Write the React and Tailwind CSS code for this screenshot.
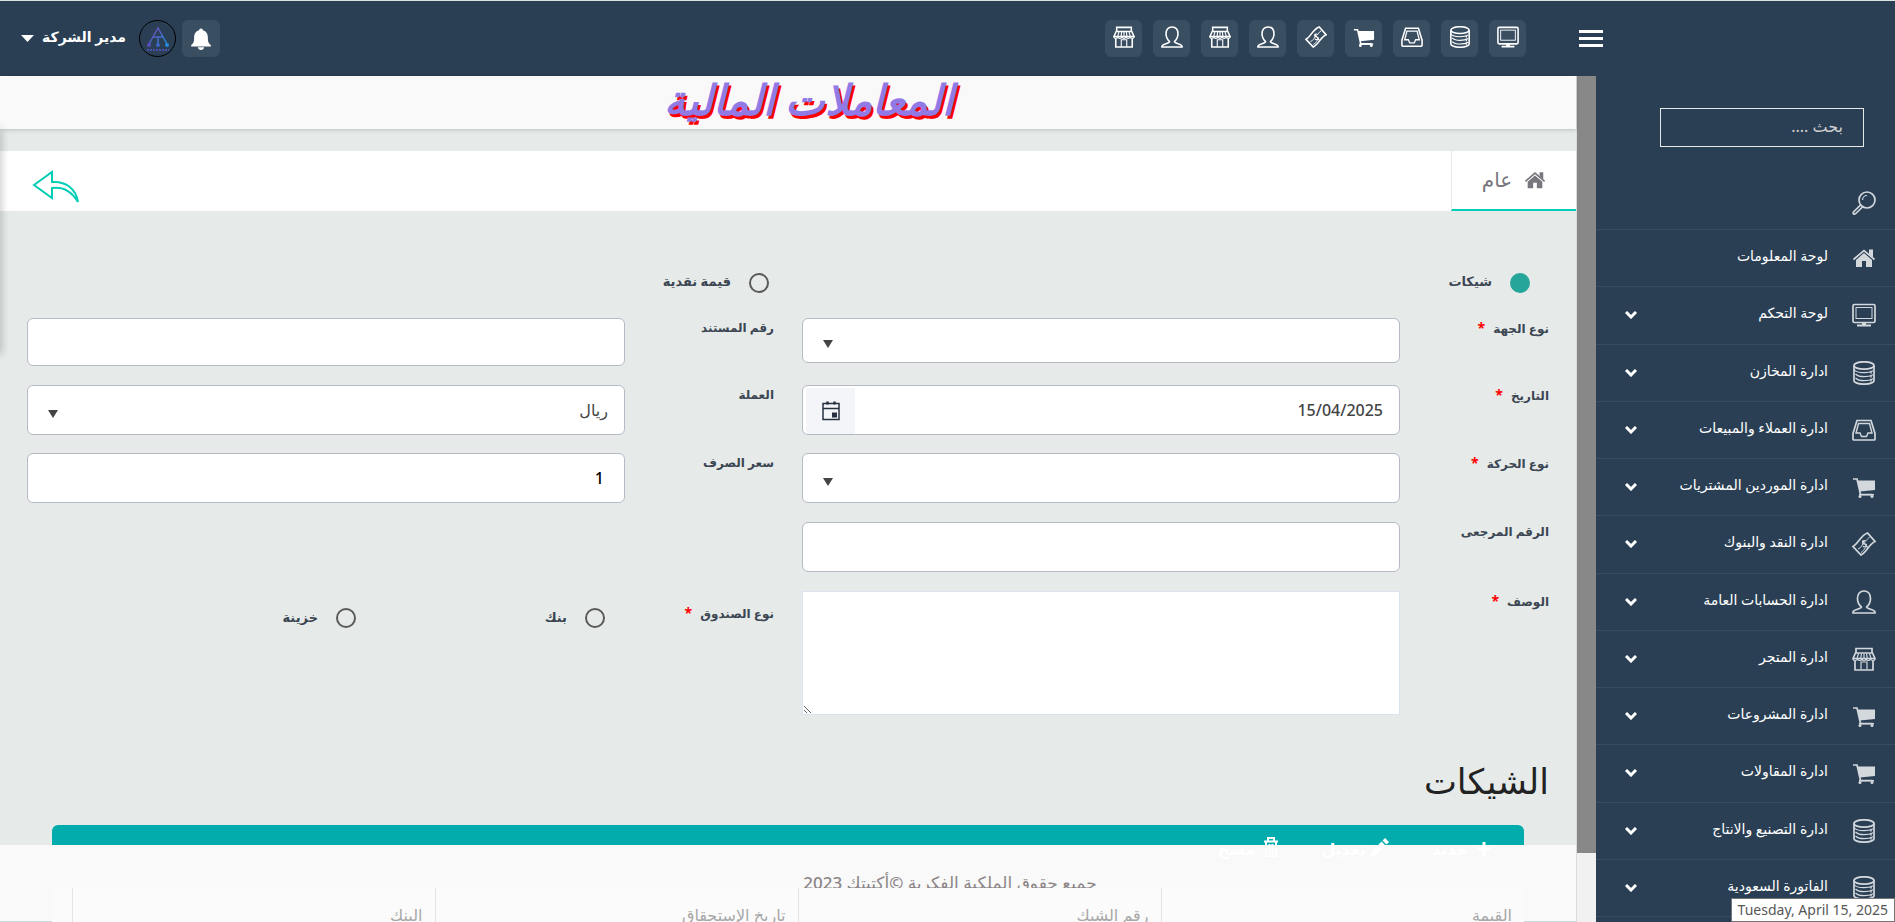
import React, { useState } from 'react';

const iconPaths = {
    monitor: (
        <>
            <rect x="1" y="1.500" width="22" height="18" rx="1.500" />
            <rect x="4" y="4.500" width="16" height="11" strokeWidth="1" />
            <path d="M10 20.500h4M5 22.500h14" strokeWidth="2" />
        </>
    ),
    database: (
        <>
            <ellipse cx="12" cy="4.500" rx="10" ry="3.700" />
            <path d="M2 4.500v15c0 2 4.500 3.700 10 3.700s10-1.700 10-3.700v-15" />
            <path d="M2 8.500c1.500 2.500 5 3.200 10 3.200 3.500 0 6.500-.5 9-2M3.500 13c2 2 5 2.700 8.500 2.700s6.500-.7 9-2M3.500 17c2 2 5 2.700 8.500 2.700s6.500-.7 9-2" strokeWidth="1.200" />
            <path d="M19 10.500v2M19 14.500v2M19 18.500v2" strokeWidth="1.500" />
        </>
    ),
    inbox: (
        <>
            <path d="M5 2.500h14l4 13v5.500q0 1-1 1h-20q-1 0-1-1v-5.500z" />
            <path d="M4 15h4l1.500 3.500h5l1.500-3.500h4l-2.500-9.500h-11z" strokeWidth="1.400" />
        </>
    ),
    cart: (
        <>
            <path d="M1 4h4l3.500 15.500h12" />
            <path d="M5.500 5.500h17.500v9.500l-15 1.500z" fill="currentColor" stroke="none" />
            <path d="M7 19h15v1.500h-15z" fill="currentColor" stroke="none" />
            <circle cx="8" cy="21.500" r="1.500" fill="currentColor" stroke="none" />
            <circle cx="20" cy="21.500" r="1.500" fill="currentColor" stroke="none" />
        </>
    ),
    money: (
        <>
            <path d="M1 14.500C6 12 9 3 15.500 1l7.500 8.500C17 12 15 20 9 23z" />
            <path d="M6 17c3-1 4-4 5-5M17.500 5.500c-1.500.5-2.500 2-3 3M9 20.500c2-1 3-3 4.500-5" strokeWidth="1" />
            <path d="M14 9.500c-1-1.500-4-.5-3.500 1.500.5 1.500 3.500.5 4 2 .5 2-2.500 2.500-3.500 1M10.500 8.500l5 7" strokeWidth="1.300" />
        </>
    ),
    user: (
        <>
            <path d="M9.500 17C7 15 5.500 12 5.500 8.500 5.500 4 8 1 12 1s6.500 3 6.500 7.500c0 3.500-1.500 6.500-4 8.500" />
            <path d="M9.500 16.500c0 3-7.500 2.500-8.500 5.500v1h22v-1c-1-3-8.500-2.500-8.500-5.500" />
        </>
    ),
    store: (
        <>
            <path d="M4 6V1.500h16V6M3.500 6h17l2.500 5.500H1z" />
            <path d="M1 12c.5 2 3.500 2 4.500 0 .5 2 3.500 2 4.300 0 .8 2 3.600 2 4.400 0 .8 2 3.700 2 4.300 0 1 2 4 2 4.500 0M6.500 6.500l-1.500 5M9.500 6.500l-.8 5M12 6.500v5M14.500 6.500l.8 5M17.500 6.500l1.500 5" strokeWidth="1.200" />
            <path d="M3 13.500v9.500h18v-9.500" />
            <path d="M9 22.500v-7.500h6v7.500" strokeWidth="1.200" />
        </>
    ),
    home: (
        <>
            <path d="M12 7l8 7v7h-6v-6h-4v6H4v-7z" fill="currentColor" stroke="none" />
            <path d="M1.500 13.500L12 4.500l10.500 9" />
            <path d="M17 3.500h4v8l-4-3.500z" fill="currentColor" stroke="none" />
        </>
    ),
    search: (
        <>
            <circle cx="15" cy="9" r="8" />
            <path d="M10.500 9c0-2.500 2-4.500 4.500-4.500" strokeWidth="1.200" />
            <path d="M9 13.500l-7.500 7.500q-.8 1.500.3 2 1 .5 2-.5l7.200-7" />
        </>
    ),
};

const Icon = ({ name, className }) => (
    <svg viewBox="0 0 24 24" className={className} fill="none" stroke="currentColor" strokeWidth="1.7" aria-hidden="true">
        {iconPaths[name]}
    </svg>
);

const shortcuts = ['monitor', 'database', 'inbox', 'cart', 'money', 'user', 'store', 'user', 'store'];

const menu = [
    { title: 'لوحة المعلومات', icon: 'home' },
    { title: 'لوحة التحكم', icon: 'monitor', sub: true },
    { title: 'ادارة المخازن', icon: 'database', sub: true },
    { title: 'ادارة العملاء والمبيعات', icon: 'inbox', sub: true },
    { title: 'ادارة الموردين المشتريات', icon: 'cart', sub: true },
    { title: 'ادارة النقد والبنوك', icon: 'money', sub: true },
    { title: 'ادارة الحسابات العامة', icon: 'user', sub: true },
    { title: 'ادارة المتجر', icon: 'store', sub: true },
    { title: 'ادارة المشروعات', icon: 'cart', sub: true },
    { title: 'ادارة المقاولات', icon: 'cart', sub: true },
    { title: 'ادارة التصنيع والانتاج', icon: 'database', sub: true },
    { title: 'الفاتورة السعودية', icon: 'database', sub: true },
];

const columns = ['القيمة', 'رقم الشيك', 'تاريخ الإستحقاق', 'البنك'];

const inputStyle = "block w-full rounded-md border border-[#b5bac5] bg-white text-base font-medium";

const Header = () => (
    <header className="flex h-[76px] shrink-0 items-center border-t border-[#dbe4e0] bg-[#2a3f54] text-white">
        <div className="flex w-[316px] shrink-0 justify-end">
            <button aria-label="القائمة" className="flex h-[17px] w-6 flex-col justify-between">
                <span className="h-[3px] w-full bg-white" />
                <span className="h-[3px] w-full bg-white" />
                <span className="h-[3px] w-full bg-white" />
            </button>
        </div>
        <div className="mr-[53px] flex gap-[11px]">
            {shortcuts.map((name, i) => (
                <button key={i} aria-label={name} className="flex h-[37px] w-[37px] items-start justify-center rounded-md bg-[#3a4e62] pt-[6px]">
                    <Icon name={name} className="h-[22px] w-[22px]" />
                </button>
            ))}
        </div>
        <div className="mr-auto ml-[21px] flex items-center">
            <button aria-label="الإشعارات" className="flex h-[37px] w-[38px] items-center justify-center rounded-md bg-[#3a4e62]">
                <svg viewBox="0 0 24 24" className="h-[22px] w-[22px]" fill="currentColor" aria-hidden="true">
                    <path d="M12 .5c-1.300 0-2 .8-2 2C6 3.500 4.500 7 4.500 10.500c0 5-1 6.500-3.200 8v1.700h21.400v-1.700c-2.200-1.500-3.200-3-3.200-8C19.500 7 18 3.500 14 2.500c0-1.200-.7-2-2-2zM8.500 21c.4 2 1.700 3 3.500 3s3.100-1 3.500-3z" />
                </svg>
            </button>
            <span className="mr-[6px] flex h-[37px] w-[37px] items-center justify-center rounded-full border border-black">
                <svg viewBox="0 0 24 26" className="h-[26px] w-6" fill="none" aria-hidden="true">
                    <defs>
                        <linearGradient id="logo" x1="0" y1="0" x2="1" y2="1">
                            <stop offset="0" stopColor="#7a3fae" />
                            <stop offset="1" stopColor="#1f8fe0" />
                        </linearGradient>
                    </defs>
                    <path d="M3 18L12 2l9 16M7 11h10M12 11v8" stroke="url(#logo)" strokeWidth="1.500" />
                    <circle cx="3" cy="19" r="2" fill="#5a4dbd" />
                    <circle cx="12" cy="19" r="2" fill="#3e64c4" />
                    <circle cx="21" cy="19" r="2" fill="#2a86d8" />
                    <path d="M1 24h22" stroke="#4a4fb0" strokeWidth="2" strokeDasharray="2 1" />
                </svg>
            </span>
            <button className="mr-[13px] flex items-center gap-2 text-sm font-bold">
                <span className="-mt-1">مدير الشركة</span>
                <svg viewBox="0 0 13 7" className="h-[7px] w-[13px]" fill="currentColor" aria-hidden="true">
                    <path d="M0 0h13L6.500 7z" />
                </svg>
            </button>
        </div>
    </header>
);

const Sidebar = () => (
    <aside className="flex w-[299px] shrink-0 flex-col bg-[#2a3f54] text-white">
        <div className="pt-8 pr-[31px]">
            <input
                type="search"
                aria-label="بحث"
                placeholder="بحث ...."
                className="block h-[39px] w-[204px] border border-[#e6ebe9] bg-transparent px-5 pb-1 text-base placeholder:text-[#cfd0d2]"
            />
        </div>
        <div className="flex h-[83px] shrink-0 items-end border-b border-[#394d62] pr-[19px] pb-[14px]">
            <button aria-label="ابحث"><Icon name="search" className="block h-6 w-6 text-[#d3d8dd]" /></button>
        </div>
        <nav className="flex flex-1 flex-col pb-[5px]">
            {menu.map((item) => (
                <a key={item.title} href="#" className="flex min-h-12 flex-1 items-center border-b border-[#394d62] pr-[19px] pl-[29px]">
                    <Icon name={item.icon} className="h-6 w-6 shrink-0 text-[#d3d8dd]" />
                    <span className="mr-6 pb-1 text-sm font-medium whitespace-nowrap">{item.title}</span>
                    {item.sub && (
                        <svg viewBox="0 0 12 8" className="mr-auto h-2 w-3 shrink-0" fill="none" stroke="currentColor" strokeWidth="3" aria-hidden="true">
                            <path d="M1 1l5 5 5-5" />
                        </svg>
                    )}
                </a>
            ))}
        </nav>
    </aside>
);

const Star = () => <span className="mr-2 text-sm leading-5 text-[#ff0000]">*</span>;

const Field = ({ id, label, required, children }) => (
    <div className="flex min-w-0 flex-1 items-start">
        <label htmlFor={id} className="w-[149px] shrink-0 text-xs leading-5 font-bold text-[#3c4653]">
            {label}
            {required && <Star />}
        </label>
        <div className="min-w-0 flex-1">{children}</div>
    </div>
);

const Select = ({ id, options, className }) => (
    <div className="relative">
        <select id={id} className={`${inputStyle} appearance-none px-4 text-[#444] ${className}`}>
            {options.map((o) => <option key={o}>{o}</option>)}
        </select>
        <svg viewBox="0 0 10 8" className="pointer-events-none absolute top-1/2 left-[21px] h-2 w-[10px]" fill="#444" aria-hidden="true">
            <path d="M0 0h10L5 8z" />
        </svg>
    </div>
);

const Radio = ({ name, label, checked, onChange, className }) => (
    <label className={`flex items-center gap-[18px] text-[13px] font-bold text-[#3c4653] ${className}`}>
        <input
            type="radio"
            name={name}
            checked={checked}
            onChange={onChange}
            className="h-5 w-5 appearance-none rounded-full border-2 border-[#5a5a5a] checked:border-[#26a69a] checked:bg-[#26a69a]"
        />
        <span className="pb-[2px]">{label}</span>
    </label>
);

const TransactionForm = () => {
    const [kind, setKind] = useState('cheque');
    const [box, setBox] = useState('');

    return (
        <form className="px-[27px] pt-[61px]">
            <div className="grid grid-cols-2 gap-7 pb-6">
                <Radio name="kind" label="شيكات" checked={kind === 'cheque'} onChange={() => setKind('cheque')} className="pr-[19px]" />
                <Radio name="kind" label="قيمة نقدية" checked={kind === 'cash'} onChange={() => setKind('cash')} className="pr-[5px]" />
            </div>

            <div className="flex h-[67px] gap-7">
                <Field id="party" label="نوع الجهة" required>
                    <Select id="party" options={['']} className="h-[45px]" />
                </Field>
                <Field id="doc" label="رقم المستند">
                    <input id="doc" type="text" className={`${inputStyle} h-12 px-4 text-black`} />
                </Field>
            </div>

            <div className="flex h-[68px] gap-7">
                <Field id="date" label="التاريخ" required>
                    <div className="flex h-[50px] items-stretch overflow-hidden rounded-md border border-[#b5bac5] bg-white">
                        <input id="date" type="text" defaultValue="15/04/2025" className="min-w-0 flex-1 px-4 text-base font-medium text-[#444]" />
                        <button type="button" aria-label="اختر التاريخ" className="mt-[2px] ml-[3px] flex w-[49px] items-center justify-center bg-[#f4f5f8]">
                            <svg viewBox="0 0 18 20" className="h-5 w-[18px]" fill="none" stroke="#263040" strokeWidth="1.500" aria-hidden="true">
                                <path d="M1 2.500h16v16H1zM1 7.500h16" />
                                <path d="M5.500.5v3M12.500.5v3" strokeWidth="2.500" />
                                <path d="M10 11.500h5v5h-5z" fill="#263040" stroke="none" />
                            </svg>
                        </button>
                    </div>
                </Field>
                <Field id="currency" label="العملة">
                    <Select id="currency" options={['ريال']} className="h-[50px]" />
                </Field>
            </div>

            <div className="flex h-[69px] gap-7">
                <Field id="move" label="نوع الحركة" required>
                    <Select id="move" options={['']} className="h-[50px]" />
                </Field>
                <Field id="rate" label="سعر الصرف">
                    <input id="rate" type="text" defaultValue="1" className={`${inputStyle} h-[50px] px-5 text-black`} />
                </Field>
            </div>

            <div className="flex h-[69px] gap-7">
                <Field id="ref" label="الرقم المرجعى">
                    <input id="ref" type="text" className={`${inputStyle} h-[50px] px-4 text-black`} />
                </Field>
                <div className="flex-1" />
            </div>

            <div className="flex gap-7">
                <Field id="desc" label="الوصف" required>
                    <textarea id="desc" className="block h-[124px] w-full resize border border-[#dbe4ee] bg-white p-4" />
                </Field>
                <fieldset className="flex min-w-0 flex-1 items-start pt-3">
                    <div className="w-[149px] shrink-0 text-xs leading-5 font-bold text-[#3c4653]">
                        نوع الصندوق<Star />
                    </div>
                    <div className="flex flex-1 pt-[5px] pr-5">
                        <Radio name="box" label="بنك" checked={box === 'bank'} onChange={() => setBox('bank')} className="w-[249px]" />
                        <Radio name="box" label="خزينة" checked={box === 'safe'} onChange={() => setBox('safe')} />
                    </div>
                </fieldset>
            </div>
        </form>
    );
};

const Cheques = () => (
    <section>
        <h2 className="mt-[38px] mr-[27px] h-[72px] text-[35px] leading-[56px] font-medium text-[#222]">الشيكات</h2>
        <div className="mx-[52px] flex h-[63px] items-start gap-[42px] rounded-t-md bg-[#02acac] pt-3 pr-8 text-base font-bold text-white">
            <button className="relative z-20 flex items-start gap-2">
                <svg viewBox="0 0 16 20" className="h-5 w-4" stroke="currentColor" strokeWidth="3" aria-hidden="true">
                    <path d="M8 5v14M1 12h14" />
                </svg>
                جديد
            </button>
            <button className="relative z-20 flex items-start gap-1">
                <svg viewBox="0 0 20 20" className="h-5 w-5" fill="currentColor" aria-hidden="true">
                    <path d="M15 1l4 4-2.500 2.500-4-4zM11.500 4.500l4 4L6 18l-5 2 1.500-6z" />
                </svg>
                تعديل
            </button>
            <button className="relative z-20 flex items-start gap-2">
                <svg viewBox="0 0 16 20" className="h-5 w-4" fill="none" stroke="currentColor" strokeWidth="2" aria-hidden="true">
                    <path d="M1 4.500h14M5 4V1h6v3M3 5v15h10V5M6.500 7v11M9.500 7v11" />
                </svg>
                مسح
            </button>
        </div>
        <div className="relative z-20 mx-[52px] bg-[#fbfbfb]">
            <table className="w-full table-fixed">
                <thead>
                    <tr>
                        {columns.map((c) => (
                            <th key={c} className="h-[54px] border-l border-[#e4e4e4] px-3 py-0 text-right text-base leading-4 font-medium text-[#a8a8a8]">{c}</th>
                        ))}
                        <th className="w-5" />
                    </tr>
                </thead>
            </table>
        </div>
    </section>
);

const App = () => {
    return (
        <div dir="rtl" className="relative flex h-screen flex-col overflow-hidden bg-[#e6ebe9] font-['Noto_Sans','DejaVu_Sans',sans-serif]">
            <Header />
            <div className="flex min-h-0 flex-1">
                <Sidebar />
                {/* scroll track of the page */}
                <div className="w-[19px] shrink-0 bg-[#f1f1f1] pb-[69px]">
                    <div className="h-full bg-[#888]" />
                </div>
                <main className="relative min-w-0 flex-1 border-r border-[#d8dcdc]">
                    <div className="flex h-[53px] items-center justify-center bg-[#f9f9f9] pb-2 pl-[42px] shadow-[0_1px_4px_rgba(0,0,0,0.18)]">
                        <h1 className="text-[42px] leading-[45px] font-bold text-[#917ae6] italic [text-shadow:2px_3px_0_red]">المعاملات المالية</h1>
                    </div>
                    <div className="mt-[22px] flex h-[60px] items-stretch bg-white">
                        <a href="#" className="flex w-[125px] items-center justify-center gap-3 border-b-2 border-l border-b-[#00cdb5] border-l-[#e6ebe9] text-xl text-[#77777d]">
                            <Icon name="home" className="h-[22px] w-[22px]" />
                            عام
                        </a>
                        <a href="#" aria-label="رجوع" className="mr-auto ml-8 self-center pt-3">
                            <svg viewBox="0 0 48 34" className="h-[34px] w-12" fill="none" stroke="#00cdb5" strokeWidth="2" aria-hidden="true">
                                <path d="M2 15L20 2v10c14-1 24 7 26 20-6-10-14-16-26-14v10z" />
                            </svg>
                        </a>
                    </div>
                    <TransactionForm />
                    <Cheques />
                    <footer className="absolute inset-x-0 bottom-0 z-10 h-[77px] border-b border-[#ccd8e2] bg-[#f9f9f9] pt-[26px] pl-[324px] text-center text-[17px] leading-6 font-medium text-[#8b8587]">
                        جميع حقوق الملكية الفكرية ©أكتيتك 2023
                    </footer>
                    {/* shadow of the closed side panel */}
                    <div className="absolute top-[53px] left-[-4px] h-[225px] w-1 shadow-[0_0_8px_rgba(0,0,0,0.4)]" />
                </main>
            </div>
            <div dir="ltr" className="absolute right-0 bottom-0 z-30 border border-[#767676] bg-white px-[6px] text-sm leading-[22px] text-[#575757]">
                Tuesday, April 15, 2025
            </div>
        </div>
    );
};

export default App;
